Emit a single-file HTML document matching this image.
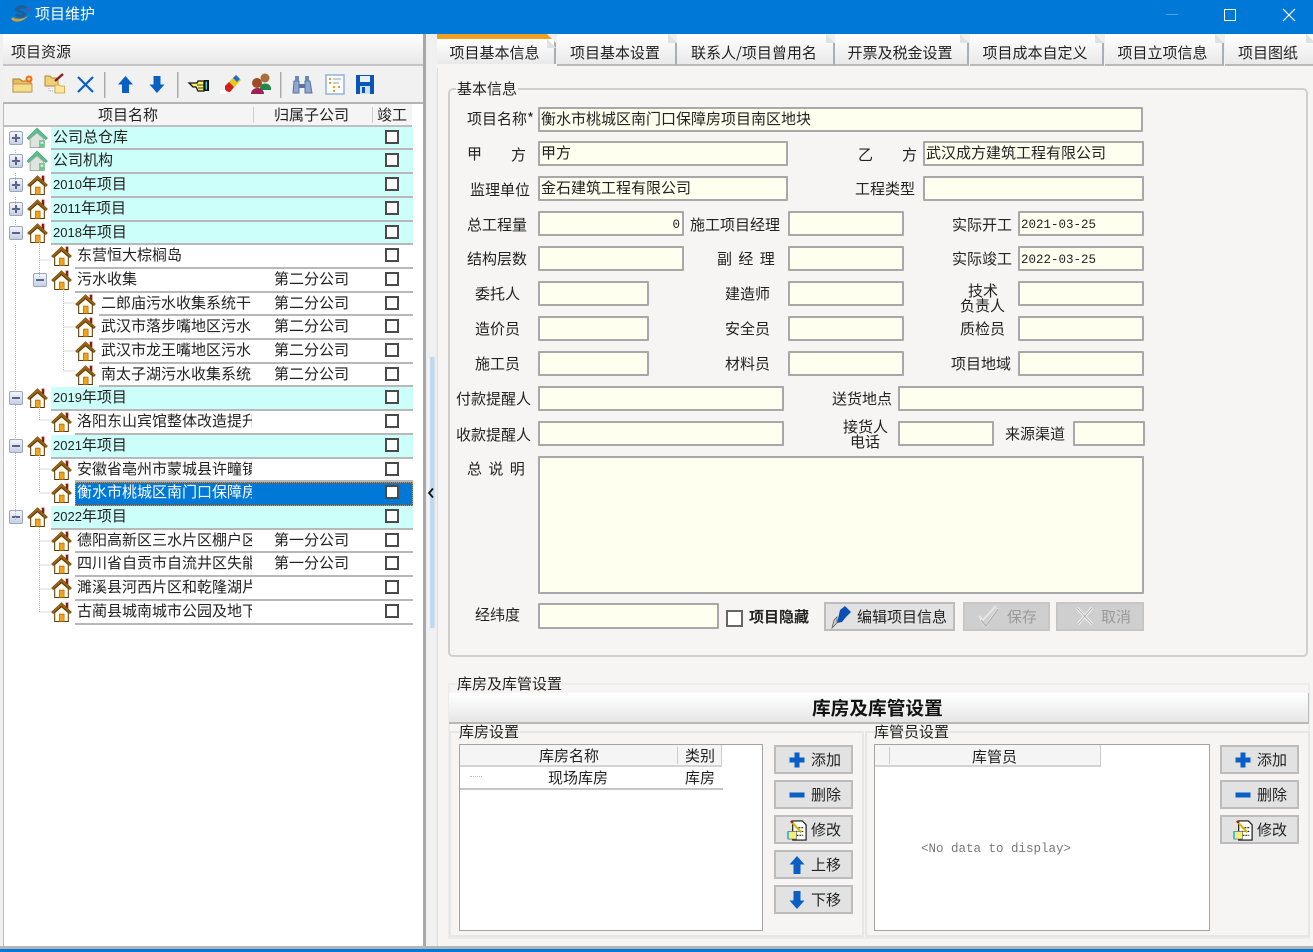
<!DOCTYPE html>
<html lang="zh"><head><meta charset="utf-8"><title>项目维护</title>
<style>
html,body{margin:0;padding:0;width:1313px;height:952px;overflow:hidden;background:#f0f0f0}
body{position:relative;font:15px/20px "WenQuanYi Zen Hei","Noto Sans CJK SC",sans-serif;color:#222;filter:blur(.3px)}
div,span,svg{position:absolute;box-sizing:border-box}
.t{white-space:nowrap;height:20px}
.d{position:static;font:13px/20px "Liberation Sans",sans-serif}
.m{position:static;font:12.5px/19px "Liberation Mono",monospace}
.f{background:#fffff0;border:2px solid #a8a8a8;border-radius:1px;padding-left:1px;line-height:19px;white-space:nowrap}
.r{left:0;width:413px}
.r::before{content:"";position:absolute;left:var(--x);right:0;top:0;bottom:0;border-bottom:2px solid #b8b8b8}
.c::before{background:#ccfff9}
.l0{--x:51px}.l1{--x:75px}.l2{--x:99px}
.n{left:calc(var(--x) + 2px);width:calc(252px - var(--x) - 2px);top:0;height:20px;overflow:hidden;white-space:nowrap}
.o{left:274px;top:0;white-space:nowrap}
.k{left:385px;top:3px;width:14px;height:14px;border:2px solid #4a4a4a;background:#fff}
.h{left:calc(var(--x) - 24px);top:0;width:21px;height:21px}
.b{left:calc(var(--x) - 42px);top:4px;width:14px;height:14px;border:1px solid #9aa6bf;border-radius:2px;background:linear-gradient(#f5f6fa,#c6cfe2)}
.b::before{content:"";position:absolute;left:2px;right:2px;top:5px;height:2px;background:#56658a}
.p::after{content:"";position:absolute;top:2px;bottom:2px;left:5px;width:2px;background:#56658a}
.tab{top:34px;height:32px;border-right:2px solid #a9b0b3;border-bottom:2px solid #b9b9b9;background:linear-gradient(#fff,#e9e9e9);padding:9px 2px 0 0;text-align:center;white-space:nowrap;clip-path:polygon(0 0,calc(100% - 9px) 0,100% 9px,100% 100%,0 100%)}
.tab::after{content:"";position:absolute;right:-2px;top:0;width:9px;height:9px;background:linear-gradient(45deg,#dfe2e3 50%,transparent 50%)}
.btn{height:29px;background:#e2e2e2;border:2px solid #bcbcbc;white-space:nowrap}
.btn span{top:3px;line-height:20px}
.btn svg{top:3px}
.dis{background:#cfcfcf;border-color:#c6c6c6;color:#9a9a9a}
.dash{stroke:#b4b4b4;stroke-width:1;stroke-dasharray:1 1;fill:none}
</style></head><body>

<svg width="0" height="0" style="position:absolute">
<defs>
<symbol id="hs" viewBox="0 0 20 20"><path d="M14 1.500h2.500v6l-2.500-2z" fill="#8c1c10"/><path d="M0.500 10.500 10 1.500l9.500 9-1.500 1.500L10 5 2 12z" fill="#9a6412" stroke="#6d4408" stroke-width=".5"/><path d="M3.500 11 10 5.500 16.500 11V19.500H3.500z" fill="#fffdf0" stroke="#5b3a0a" stroke-width="1"/><path d="M8 12.500h4.500v7H8z" fill="#f2a31b" stroke="#a8640a" stroke-width=".6"/></symbol>
<symbol id="hg" viewBox="0 0 20 20"><path d="M0 10.500 9.500 1 19.500 10.500 18 12 9.500 5 1.500 12z" fill="#58c08a" stroke="#3a9c6a" stroke-width=".5"/><path d="M3 11 9.500 5.500 16 11V19.500H3z" fill="#dfe4e0" stroke="#a4aca8" stroke-width="1"/><path d="M11.500 12.500h5.500v7h-5.500z" fill="#6cc48e"/><path d="M13 14h2.500v2H13z" fill="#e8f5ec"/></symbol>
<symbol id="plus" viewBox="0 0 16 16"><path d="M5.500 0.500h5v5h5v5h-5v5h-5v-5h-5v-5h5z" fill="#0a5fc4"/></symbol>
<symbol id="minus" viewBox="0 0 16 16"><rect x=".5" y="5.500" width="15" height="5" fill="#0a5fc4"/></symbol>
<symbol id="up" viewBox="0 0 16 18"><path d="M8 0 15.500 8.500H11.500V18H4.500V8.500H.5z" fill="#0a5fc4"/></symbol>
<symbol id="down" viewBox="0 0 16 18"><path d="M8 18 15.500 9.500H11.500V0H4.500V9.500H.5z" fill="#0a5fc4"/></symbol>
<symbol id="edit" viewBox="0 0 22 22"><path d="M6 1h10l4 4v16H6z" fill="#fff" stroke="#111" stroke-width="1.200"/><path d="M9 8h8M9 12h8M10 16h7" stroke="#222" stroke-width="1.200" stroke-dasharray="2 1"/><path d="M1 12h9v8H1z" fill="#f4ef7a" stroke="#555" stroke-width=".6"/><path d="M0 12h2v8H0z" fill="#36c0d0"/><path d="M4 1 15 13" stroke="#d8b800" stroke-width="2.200"/><path d="M4 1 6 3" stroke="#a32020" stroke-width="2.200"/></symbol>
</defs></svg>

<!-- title bar -->
<div style="left:0;top:0;width:1313px;height:34px;background:#0078d7"></div>
<svg style="left:10px;top:4px" width="21" height="20" viewBox="0 0 21 20"><path d="M1 15C4 19 13 19 19 11 15 15 6 16 3 13z" fill="#c9a23c"/><path d="M6 3C10 0 17 1 17 4L12 5C10 4 9 5 10 6L15 8C18 10 15 14 10 14 7 14 5 12 5 10L9 10C10 11 12 11 12 10L7 8C4 7 4 5 6 3z" fill="#1e5f96"/><circle cx="18" cy="6" r="1.200" fill="#c03030"/></svg>
<span class="t" style="left:35px;top:4px;color:#fff">项目维护</span>
<div style="left:1166px;top:14px;width:12px;height:1px;background:#4fa3e6"></div>
<div style="left:1224px;top:9px;width:12px;height:12px;border:1.500px solid #fff"></div>
<svg style="left:1282px;top:8px" width="14" height="14" viewBox="0 0 14 14"><path d="M1 1 13 13M13 1 1 13" stroke="#fff" stroke-width="1.200"/></svg>

<!-- left panel -->
<div style="left:3px;top:34px;width:421px;height:32px;background:linear-gradient(#fff,#e8e8e8);border-bottom:2px solid #c4c4c4"></div>
<span class="t" style="left:11px;top:42px">项目资源</span>
<div style="left:3px;top:66px;width:421px;height:38px;background:#f1f1f1;border-bottom:2px solid #b4b4b4"></div>
<div style="left:3px;top:104px;width:420px;height:846px;background:#fff;border-left:1px solid #bbb"></div>
<div style="left:423px;top:34px;width:3px;height:914px;background:#a8a8a8"></div>
<div style="left:0;top:34px;width:3px;height:914px;background:#f0f0f0"></div>

<!-- toolbar icons -->
<svg style="left:0;top:66px" width="400" height="38" viewBox="0 66 400 38">
<path d="M13 79h7l2 2h9v11H13z" fill="#e8bc62" stroke="#a87c28"/><path d="M13 84h19v8H13z" fill="#f6dc8c" stroke="#b08a30" stroke-width=".8"/><circle cx="29" cy="79" r="3.500" fill="#f26a20"/><circle cx="29" cy="79" r="1.500" fill="#ffe080"/>
<path d="M45 76h5l2 2h6v8H45z" fill="#f0d078" stroke="#b08a30"/><path d="M55 85h4l1.500 1h4v7H55z" fill="#fbe89a" stroke="#c8a040" stroke-width=".8"/><path d="M49 86v5h6" class="dash"/><path d="M55 81 63 74" stroke="#8c1c1c" stroke-width="2.400"/>
<path d="M78 77 93 92M93 77 78 92" stroke="#0a5fc4" stroke-width="2.200"/>
<rect x="104" y="72" width="1.500" height="26" fill="#aaa"/>
<rect x="177" y="72" width="1.500" height="26" fill="#aaa"/>
<rect x="280" y="72" width="1.500" height="26" fill="#aaa"/>
<path d="M125.500 76 133 84.500H129V93H122V84.500H118z" fill="#0a5fc4"/>
<path d="M157 93 164.500 84.500H160.500V76H153.500V84.500H149.500z" fill="#0a5fc4"/>
<path d="M189 83h8l1-2h6v10h-6l-2-4h-3z" fill="#f5f06a" stroke="#111" stroke-width="1.300"/><path d="M197 85h7M198 88h6" stroke="#111" stroke-width=".8"/><rect x="204" y="80" width="5" height="11" fill="#111"/><rect x="205.500" y="81.500" width="1.500" height="8" fill="#35d0c8"/>
<path d="M225 86 236 75 241 80 231 91z" fill="#e8c820"/><path d="M233 78 236 75 240 79 237 82z" fill="#1e6cd0"/><path d="M225 86 229 82 234 87 230 92Q226 92 225 89z" fill="#d02020"/><rect x="220" y="90" width="6" height="4" fill="#fff"/>
<circle cx="265" cy="78" r="4.500" fill="#a87038"/><path d="M260 88c0-6 10-6 11 0v2h-11z" fill="#1c8a48"/><circle cx="257" cy="83" r="5" fill="#a04a26"/><path d="M251 94c0-8 13-8 13 0z" fill="#a02058"/>
<path d="M294 81h5v12h-6zM305 81h5l2 12h-7z" fill="#8ea8d0" stroke="#5a74a0"/><rect x="299" y="84" width="6" height="4" fill="#5a74a0"/><rect x="295" y="76" width="4" height="5" fill="#6a88b8"/><rect x="305" y="76" width="4" height="5" fill="#6a88b8"/>
<rect x="326" y="75" width="18" height="19" fill="#fdfdfd" stroke="#8fb4d8" stroke-width="1.500"/><path d="M329 79h2M329 83h2M333 87h2M333 91h2M338 87h2" stroke="#ee9a20" stroke-width="2"/><path d="M333 79h8M333 83h6" stroke="#8aa0b8"/>
<path d="M356 75h18v19h-18z" fill="#0a56b8"/><rect x="360" y="76" width="10" height="6" fill="#e8f0fa"/><rect x="360" y="86" width="10" height="8" fill="#cfe0f4"/><rect x="362" y="87" width="3" height="6" fill="#0a56b8"/>
</svg>

<!-- tree header -->
<div style="left:4px;top:104px;width:408px;height:23px;background:#f5f5f5;border-bottom:2px solid #c0c0c0"></div>
<span class="t" style="left:98px;top:105px">项目名称</span>
<div style="left:253px;top:107px;width:1px;height:16px;background:#ccc"></div>
<span class="t" style="left:274px;top:105px">归属子公司</span>
<div style="left:372px;top:107px;width:1px;height:16px;background:#ccc"></div>
<span class="t" style="left:377px;top:105px">竣工</span>

<!-- tree rows -->
<div class="r l0 c" style="top:127px;height:23px"><div class="b p"></div><svg class="h"><use href="#hg"/></svg><span class="n">公司总仓库</span><div class="k"></div></div>
<div class="r l0 c" style="top:150px;height:24px"><div class="b p"></div><svg class="h"><use href="#hg"/></svg><span class="n">公司机构</span><div class="k"></div></div>
<div class="r l0 c" style="top:174px;height:24px"><div class="b p"></div><svg class="h"><use href="#hs"/></svg><span class="n"><span class="d">2010</span>年项目</span><div class="k"></div></div>
<div class="r l0 c" style="top:198px;height:24px"><div class="b p"></div><svg class="h"><use href="#hs"/></svg><span class="n"><span class="d">2011</span>年项目</span><div class="k"></div></div>
<div class="r l0 c" style="top:222px;height:23px"><div class="b"></div><svg class="h"><use href="#hs"/></svg><span class="n"><span class="d">2018</span>年项目</span><div class="k"></div></div>
<div class="r l1" style="top:245px;height:24px"><svg class="h"><use href="#hs"/></svg><span class="n">东营恒大棕榈岛</span><div class="k"></div></div>
<div class="r l1" style="top:269px;height:24px"><div class="b"></div><svg class="h"><use href="#hs"/></svg><span class="n">污水收集</span><span class="o">第二分公司</span><div class="k"></div></div>
<div class="r l2" style="top:293px;height:23px"><svg class="h"><use href="#hs"/></svg><span class="n">二郎庙污水收集系统干管工程</span><span class="o">第二分公司</span><div class="k"></div></div>
<div class="r l2" style="top:316px;height:24px"><svg class="h"><use href="#hs"/></svg><span class="n">武汉市落步嘴地区污水收集</span><span class="o">第二分公司</span><div class="k"></div></div>
<div class="r l2" style="top:340px;height:24px"><svg class="h"><use href="#hs"/></svg><span class="n">武汉市龙王嘴地区污水收集</span><span class="o">第二分公司</span><div class="k"></div></div>
<div class="r l2" style="top:364px;height:23px"><svg class="h"><use href="#hs"/></svg><span class="n">南太子湖污水收集系统工程</span><span class="o">第二分公司</span><div class="k"></div></div>
<div class="r l0 c" style="top:387px;height:24px"><div class="b"></div><svg class="h"><use href="#hs"/></svg><span class="n"><span class="d">2019</span>年项目</span><div class="k"></div></div>
<div class="r l1" style="top:411px;height:24px"><svg class="h"><use href="#hs"/></svg><span class="n">洛阳东山宾馆整体改造提升工程</span><div class="k"></div></div>
<div class="r l0 c" style="top:435px;height:24px"><div class="b"></div><svg class="h"><use href="#hs"/></svg><span class="n"><span class="d">2021</span>年项目</span><div class="k"></div></div>
<div class="r l1" style="top:459px;height:23px"><svg class="h"><use href="#hs"/></svg><span class="n">安徽省亳州市蒙城县许疃镇项目</span><div class="k"></div></div>
<div class="r l1" style="top:482px;height:24px"><div style="left:75px;top:0;width:338px;height:24px;background:#0078d7;border:1px dotted #e89030"></div><svg class="h"><use href="#hs"/></svg><span class="n" style="color:#fff">衡水市桃城区南门口保障房项目</span><div class="k"></div></div>
<div class="r l0 c" style="top:506px;height:24px"><div class="b"></div><svg class="h"><use href="#hs"/></svg><span class="n"><span class="d">2022</span>年项目</span><div class="k"></div></div>
<div class="r l1" style="top:530px;height:23px"><svg class="h"><use href="#hs"/></svg><span class="n">德阳高新区三水片区棚户区改造</span><span class="o">第一分公司</span><div class="k"></div></div>
<div class="r l1" style="top:553px;height:24px"><svg class="h"><use href="#hs"/></svg><span class="n">四川省自贡市自流井区失能人员</span><span class="o">第一分公司</span><div class="k"></div></div>
<div class="r l1" style="top:577px;height:24px"><svg class="h"><use href="#hs"/></svg><span class="n">濉溪县河西片区和乾隆湖片区</span><div class="k"></div></div>
<div class="r l1" style="top:601px;height:24px"><svg class="h"><use href="#hs"/></svg><span class="n">古蔺县城南城市公园及地下停车</span><div class="k"></div></div>

<!-- tree connectors -->
<svg style="left:0;top:120px" width="110" height="510" viewBox="0 120 110 510">
<path class="dash" d="M15.500 150v8M15.500 173v8M15.500 197v8M15.500 220v8M15.500 245v147M15.500 405v35M15.500 453v68M39.500 240v38M39.500 260h12M39.500 405v15h12M39.500 453v40h12M39.500 469h12M39.500 523v89h12M39.500 541h12M39.500 565h12M39.500 589h12M63.500 287v84h12M63.500 303h12M63.500 327h12M63.500 351h12"/>
</svg>

<!-- splitter -->
<div style="left:426px;top:34px;width:11px;height:914px;background:#f0f0f0"></div>
<div style="left:427px;top:356px;width:9px;height:273px;background:linear-gradient(90deg,#fff,#b8d4ea 50%,#cfe1f0);border:1px solid #e8eef3;border-radius:3px"></div>
<svg style="left:428px;top:488px" width="7" height="10" viewBox="0 0 7 10"><path d="M5 0.500 1 5l4 4.500" fill="none" stroke="#111" stroke-width="1.800"/></svg>

<!-- right pane -->
<div style="left:437px;top:66px;width:876px;height:881px;background:#f6f5f4;border-left:1px solid #ddd"></div>
<div class="tab" style="left:437px;width:119px;border-top:5px solid #f0a020;padding-top:4px">项目基本信息</div>
<div class="tab" style="left:557px;width:120px">项目基本设置</div>
<div class="tab" style="left:677px;width:158px">联系人/项目曾用名</div>
<div class="tab" style="left:835px;width:134px">开票及税金设置</div>
<div class="tab" style="left:970px;width:134px">项目成本自定义</div>
<div class="tab" style="left:1105px;width:119px">项目立项信息</div>
<div class="tab" style="left:1225px;width:88px;clip-path:none;border-right:0">项目图纸</div>
<div style="left:437px;top:64px;width:119px;height:4px;background:#f6f5f4"></div>

<!-- basic group -->
<div style="left:448px;top:88px;width:860px;height:569px;border:2px solid #cfcfcf;border-radius:5px"></div>
<span class="t" style="left:456px;top:79px;background:#f6f5f4;padding:0 1px">基本信息</span>

<span class="t" style="left:467px;top:109px">项目名称*</span>
<div class="f" style="left:538px;top:107px;width:605px;height:25px">衡水市桃城区南门口保障房项目南区地块</div>

<span class="t" style="left:467px;top:144px">甲</span><span class="t" style="left:511px;top:145px">方</span>
<div class="f" style="left:538px;top:141px;width:250px;height:25px">甲方</div>
<span class="t" style="left:858px;top:145px">乙</span><span class="t" style="left:902px;top:145px">方</span>
<div class="f" style="left:923px;top:141px;width:221px;height:25px">武汉成方建筑工程有限公司</div>

<span class="t" style="left:470px;top:180px">监理单位</span>
<div class="f" style="left:538px;top:176px;width:250px;height:25px">金石建筑工程有限公司</div>
<span class="t" style="left:855px;top:179px">工程类型</span>
<div class="f" style="left:923px;top:176px;width:221px;height:25px"></div>

<span class="t" style="left:467px;top:215px">总工程量</span>
<div class="f" style="left:538px;top:211px;width:146px;height:25px;text-align:right;padding-right:2px"><span class="m">0</span></div>
<span class="t" style="left:690px;top:215px">施工项目经理</span>
<div class="f" style="left:788px;top:211px;width:116px;height:25px"></div>
<span class="t" style="left:952px;top:215px">实际开工</span>
<div class="f" style="left:1018px;top:211px;width:126px;height:25px"><span class="m">2021-03-25</span></div>

<span class="t" style="left:467px;top:249px">结构层数</span>
<div class="f" style="left:538px;top:246px;width:146px;height:25px"></div>
<span class="t" style="left:717px;top:249px;letter-spacing:1.500px">副 经 理</span>
<div class="f" style="left:788px;top:246px;width:116px;height:25px"></div>
<span class="t" style="left:952px;top:249px">实际竣工</span>
<div class="f" style="left:1018px;top:246px;width:126px;height:25px"><span class="m">2022-03-25</span></div>

<span class="t" style="left:475px;top:284px">委托人</span>
<div class="f" style="left:538px;top:281px;width:111px;height:25px"></div>
<span class="t" style="left:725px;top:284px">建造师</span>
<div class="f" style="left:788px;top:281px;width:116px;height:25px"></div>
<span class="t" style="left:968px;top:281px">技术</span>
<span class="t" style="left:960px;top:296px">负责人</span>
<div class="f" style="left:1018px;top:281px;width:126px;height:25px"></div>

<span class="t" style="left:475px;top:319px">造价员</span>
<div class="f" style="left:538px;top:316px;width:111px;height:25px"></div>
<span class="t" style="left:725px;top:319px">安全员</span>
<div class="f" style="left:788px;top:316px;width:116px;height:25px"></div>
<span class="t" style="left:960px;top:319px">质检员</span>
<div class="f" style="left:1018px;top:316px;width:126px;height:25px"></div>

<span class="t" style="left:475px;top:354px">施工员</span>
<div class="f" style="left:538px;top:351px;width:111px;height:25px"></div>
<span class="t" style="left:725px;top:354px">材料员</span>
<div class="f" style="left:788px;top:351px;width:116px;height:25px"></div>
<span class="t" style="left:951px;top:354px">项目地域</span>
<div class="f" style="left:1018px;top:351px;width:126px;height:25px"></div>

<span class="t" style="left:456px;top:389px">付款提醒人</span>
<div class="f" style="left:538px;top:386px;width:246px;height:25px"></div>
<span class="t" style="left:832px;top:389px">送货地点</span>
<div class="f" style="left:898px;top:386px;width:246px;height:25px"></div>

<span class="t" style="left:456px;top:425px">收款提醒人</span>
<div class="f" style="left:538px;top:421px;width:246px;height:25px"></div>
<span class="t" style="left:843px;top:417px">接货人</span>
<span class="t" style="left:850px;top:432px">电话</span>
<div class="f" style="left:898px;top:421px;width:96px;height:25px"></div>
<span class="t" style="left:1005px;top:424px">来源渠道</span>
<div class="f" style="left:1073px;top:421px;width:72px;height:25px"></div>

<span class="t" style="left:467px;top:459px;letter-spacing:1.500px">总 说 明</span>
<div class="f" style="left:538px;top:456px;width:606px;height:138px"></div>

<span class="t" style="left:475px;top:605px">经纬度</span>
<div class="f" style="left:538px;top:603px;width:181px;height:26px"></div>
<div style="left:726px;top:610px;width:17px;height:17px;background:#fff;border:2px solid #666"></div>
<span class="t" style="left:749px;top:607px;font-weight:bold">项目隐藏</span>

<div class="btn" style="left:824px;top:602px;width:131px">
<svg style="left:5px;top:1px" width="22" height="24" viewBox="0 0 22 24"><path d="M9 5 14 1l6 6-5 5-4 5-5 1z" fill="#0a4fb4"/><path d="M6 18 1 23l2-8 3-3z" fill="#c8c8c8" stroke="#666" stroke-width=".8"/></svg>
<span style="left:31px">编辑项目信息</span></div>
<div class="btn dis" style="left:963px;top:602px;width:87px">
<svg style="left:13px;top:1px" width="22" height="24" viewBox="0 0 22 24"><path d="M2 14l6 7L20 3M1 11l4 4L18 1" fill="none" stroke="#e8e8e8" stroke-width="2"/><path d="M3 15l5 6L20 4" fill="none" stroke="#a8a8a8" stroke-width="1"/></svg>
<span style="left:42px">保存</span></div>
<div class="btn dis" style="left:1056px;top:602px;width:88px">
<svg style="left:17px;top:1px" width="20" height="22" viewBox="0 0 20 22"><path d="M2 3l15 16M17 3 3 19" fill="none" stroke="#eee" stroke-width="3"/><path d="M2 3l15 16M17 3 3 19" fill="none" stroke="#a8a8a8" stroke-width=".8"/></svg>
<span style="left:43px">取消</span></div>

<!-- warehouse group -->
<div style="left:448px;top:683px;width:862px;height:256px;border:2px solid #ececec"></div>
<span class="t" style="left:457px;top:674px;background:#f6f5f4">库房及库管设置</span>
<div style="left:449px;top:693px;width:860px;height:31px;background:linear-gradient(#fff,#e6e6e6);border-bottom:2px solid #b8b8b8;border-right:1px solid #bbb"></div>
<span class="t" style="left:812px;top:698px;font-size:18.700px;font-weight:bold;color:#111">库房及库管设置</span>

<div style="left:449px;top:731px;width:415px;height:206px;border:2px solid #e6e6e6"></div>
<span class="t" style="left:459px;top:722px">库房设置</span>
<div style="left:459px;top:744px;width:304px;height:187px;background:#fff;border:1.500px solid #a4a4a4"></div>
<div style="left:460px;top:745px;width:262px;height:22px;background:#f5f5f5;border-bottom:2px solid #d4d4d4;border-right:1px solid #ccc"></div>
<span class="t" style="left:539px;top:746px">库房名称</span>
<div style="left:677px;top:747px;width:1px;height:17px;background:#ccc"></div>
<span class="t" style="left:685px;top:746px">类别</span>
<div style="left:460px;top:788px;width:263px;height:1.500px;background:#c4c4c4"></div>
<span class="t" style="left:548px;top:768px">现场库房</span>
<span class="t" style="left:685px;top:768px">库房</span>
<div style="left:470px;top:776px;width:12px;height:1px;border-top:1px dotted #bbb"></div>

<div class="btn" style="left:774px;top:745px;width:79px"><svg style="left:13px;top:5px" width="16" height="16"><use href="#plus"/></svg><span style="left:35px">添加</span></div>
<div class="btn" style="left:774px;top:780px;width:79px"><svg style="left:13px;top:5px" width="16" height="16"><use href="#minus"/></svg><span style="left:35px">删除</span></div>
<div class="btn" style="left:774px;top:815px;width:79px"><svg style="left:11px;top:3px" width="21" height="21"><use href="#edit"/></svg><span style="left:35px">修改</span></div>
<div class="btn" style="left:774px;top:850px;width:79px"><svg style="left:13px;top:4px" width="16" height="18"><use href="#up"/></svg><span style="left:35px">上移</span></div>
<div class="btn" style="left:774px;top:885px;width:79px"><svg style="left:13px;top:4px" width="16" height="18"><use href="#down"/></svg><span style="left:35px">下移</span></div>

<div style="left:865px;top:731px;width:445px;height:206px;border:2px solid #e6e6e6"></div>
<span class="t" style="left:874px;top:722px">库管员设置</span>
<div style="left:874px;top:744px;width:336px;height:187px;background:#fff;border:1.500px solid #a4a4a4"></div>
<div style="left:875px;top:745px;width:226px;height:22px;background:#f5f5f5;border-bottom:2px solid #d4d4d4;border-right:1px solid #ccc"></div>
<div style="left:889px;top:747px;width:1px;height:17px;background:#ccc"></div>
<span class="t" style="left:972px;top:747px">库管员</span>
<span class="t" style="left:921px;top:839px;font:12.500px/20px 'Liberation Mono',monospace;color:#777">&lt;No data to display&gt;</span>

<div class="btn" style="left:1220px;top:745px;width:79px"><svg style="left:13px;top:5px" width="16" height="16"><use href="#plus"/></svg><span style="left:35px">添加</span></div>
<div class="btn" style="left:1220px;top:780px;width:79px"><svg style="left:13px;top:5px" width="16" height="16"><use href="#minus"/></svg><span style="left:35px">删除</span></div>
<div class="btn" style="left:1220px;top:815px;width:79px"><svg style="left:11px;top:3px" width="21" height="21"><use href="#edit"/></svg><span style="left:35px">修改</span></div>

<!-- bottom border -->
<div style="left:0;top:946px;width:1313px;height:3px;background:#b4b4b4"></div>
<div style="left:0;top:949px;width:1313px;height:3px;background:#0078d7"></div>
</body></html>
